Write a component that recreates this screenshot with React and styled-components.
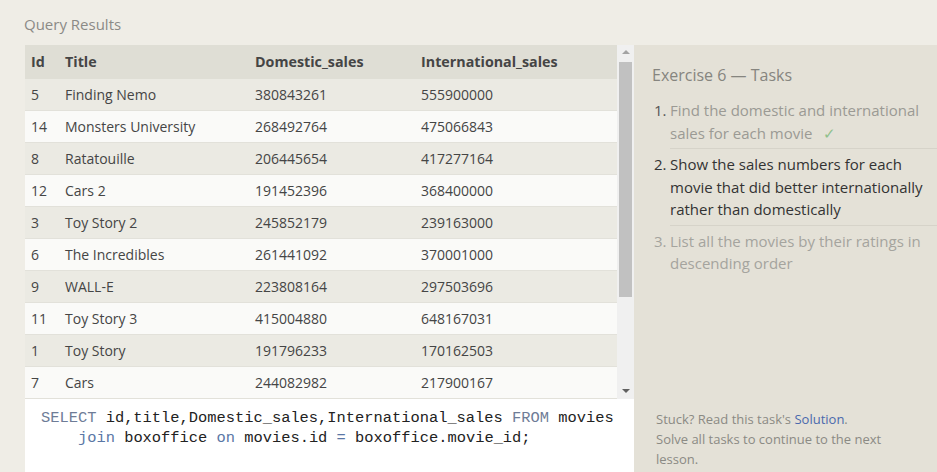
import React from 'react'
import styled, { createGlobalStyle } from 'styled-components'

const GlobalStyle = createGlobalStyle`
  html, body {
    margin: 0;
    padding: 0;
    background: #efede6;
  }
  * {
    box-sizing: border-box;
  }
`

const Page = styled.div`
  width: 937px;
  height: 472px;
  overflow: hidden;
  display: flex;
  flex-direction: column;
  padding-left: 25px;
  font-family: 'Open Sans', 'Noto Sans', sans-serif;
`

const PageTitle = styled.div`
  height: 45px;
  padding-top: 13px;
  margin-left: -1px;
  font-size: 15px;
  line-height: 22px;
  color: #8b8a86;
`

const Main = styled.div`
  flex: 1;
  display: flex;
  min-height: 0;
`

const ResultsColumn = styled.div`
  width: 609px;
  display: flex;
  flex-direction: column;
`

const TableArea = styled.div`
  height: 354px;
  display: flex;
`

const Table = styled.div`
  flex: 1;
  display: flex;
  flex-direction: column;
  overflow: hidden;
`

const Row = styled.div`
  display: grid;
  grid-template-columns: 40px 190px 166px 1fr;
  align-items: center;
  height: ${(p) => (p.head ? 34 : 32)}px;
  flex-shrink: 0;
  background: ${(p) => (p.head ? '#dfded5' : p.odd ? '#ebeae3' : '#fafaf8')};
  border-bottom: 1px solid ${(p) => (p.head ? '#dfded5' : '#e2e1da')};
  color: #454545;
  font-size: ${(p) => (p.head ? 14.3 : 14)}px;
  font-weight: ${(p) => (p.head ? 700 : 400)};
`

const Cell = styled.div`
  padding-left: ${(p) => (p.first ? 6 : 0)}px;
  white-space: nowrap;
`

const Scrollbar = styled.div`
  width: 17px;
  background: #f0f0f0;
  display: flex;
  flex-direction: column;
  align-items: center;
  padding: 5px 0 6px;
`

const Arrow = styled.div`
  width: 0;
  height: 0;
  border-left: 4px solid transparent;
  border-right: 4px solid transparent;
  ${(p) => (p.down ? 'border-top: 4px solid #606060;' : 'border-bottom: 4px solid #a3a3a3;')}
`

const Track = styled.div`
  flex: 1;
  width: 100%;
  padding: 8px 2px 0 2px;
`

const Thumb = styled.div`
  width: 100%;
  height: 235px;
  background: #c1c1c1;
`

const Editor = styled.div`
  flex: 1;
  background: #ffffff;
  padding: 9px 0 0 16px;
  font-family: 'Liberation Mono', 'DejaVu Sans Mono', monospace;
  font-size: 15.4px;
  line-height: 20px;
  color: #222;
  white-space: pre;
`

const Keyword = styled.span`
  color: ${(p) => (p.soft ? '#6e7c97' : '#5a77a6')};
`

const TasksPanel = styled.div`
  flex: 1;
  background: #e4e1d7;
  display: flex;
  flex-direction: column;
  padding: 18px 0 3px 18px;
`

const TasksTitle = styled.div`
  font-size: 16px;
  line-height: 24px;
  color: #86857f;
  margin-bottom: 12px;
`

const TaskList = styled.ol`
  margin: 0;
  padding: 0;
  list-style: none;
`

const Task = styled.li`
  display: flex;
  font-size: 15px;
  line-height: 22.5px;
  color: ${(p) => p.tone};
`

const TaskNum = styled.span`
  width: 18px;
  flex-shrink: 0;
  padding-left: 2px;
  color: ${(p) => p.tone || 'inherit'};
`

const TaskBody = styled.div`
  flex: 1;
  padding-bottom: ${(p) => (p.last ? 0 : 4)}px;
  margin-bottom: ${(p) => (p.last ? 0 : 4)}px;
  border-bottom: ${(p) => (p.last ? 'none' : '1px solid #d6d3c9')};
`

const Check = styled.span`
  display: inline-block;
  color: #8fc08c;
  margin-left: 10px;
  line-height: 1;
`

const Help = styled.div`
  margin-top: auto;
  padding-left: 4px;
  font-size: 13px;
  line-height: 20px;
  color: #8b8a84;
  width: 250px;
`

const SolutionLink = styled.a`
  color: #4a69ad;
  text-decoration: none;
`

const movies = [
  ['5', 'Finding Nemo', '380843261', '555900000'],
  ['14', 'Monsters University', '268492764', '475066843'],
  ['8', 'Ratatouille', '206445654', '417277164'],
  ['12', 'Cars 2', '191452396', '368400000'],
  ['3', 'Toy Story 2', '245852179', '239163000'],
  ['6', 'The Incredibles', '261441092', '370001000'],
  ['9', 'WALL-E', '223808164', '297503696'],
  ['11', 'Toy Story 3', '415004880', '648167031'],
  ['1', 'Toy Story', '191796233', '170162503'],
  ['7', 'Cars', '244082982', '217900167'],
]

const App = () => (
  <Page>
    <GlobalStyle />
    <PageTitle>Query Results</PageTitle>
    <Main>
      <ResultsColumn>
        <TableArea>
          <Table>
            <Row head>
              <Cell first>Id</Cell>
              <Cell>Title</Cell>
              <Cell>Domestic_sales</Cell>
              <Cell>International_sales</Cell>
            </Row>
            {movies.map((m, i) => (
              <Row key={m[0]} odd={i % 2 === 0}>
                <Cell first>{m[0]}</Cell>
                <Cell>{m[1]}</Cell>
                <Cell>{m[2]}</Cell>
                <Cell>{m[3]}</Cell>
              </Row>
            ))}
          </Table>
          <Scrollbar>
            <Arrow />
            <Track>
              <Thumb />
            </Track>
            <Arrow down />
          </Scrollbar>
        </TableArea>
        <Editor>
          <Keyword soft>SELECT</Keyword> id,title,Domestic_sales,International_sales <Keyword soft>FROM</Keyword> movies
          {'\n    '}
          <Keyword>join</Keyword> boxoffice <Keyword>on</Keyword> movies.id <Keyword>=</Keyword> boxoffice.movie_id;
        </Editor>
      </ResultsColumn>
      <TasksPanel>
        <TasksTitle>Exercise 6 — Tasks</TasksTitle>
        <TaskList>
          <Task tone="#9b9a94">
            <TaskNum tone="#555555">1.</TaskNum>
            <TaskBody>
              Find the domestic and international sales for each movie
              <Check>✓</Check>
            </TaskBody>
          </Task>
          <Task tone="#333333">
            <TaskNum>2.</TaskNum>
            <TaskBody>
              Show the sales numbers for each movie that did better internationally rather than domestically
            </TaskBody>
          </Task>
          <Task tone="#a5a49e">
            <TaskNum>3.</TaskNum>
            <TaskBody last>List all the movies by their ratings in descending order</TaskBody>
          </Task>
        </TaskList>
        <Help>
          Stuck? Read this task's <SolutionLink href="#">Solution</SolutionLink>.
          <br />
          Solve all tasks to continue to the next lesson.
        </Help>
      </TasksPanel>
    </Main>
  </Page>
)

export default App
